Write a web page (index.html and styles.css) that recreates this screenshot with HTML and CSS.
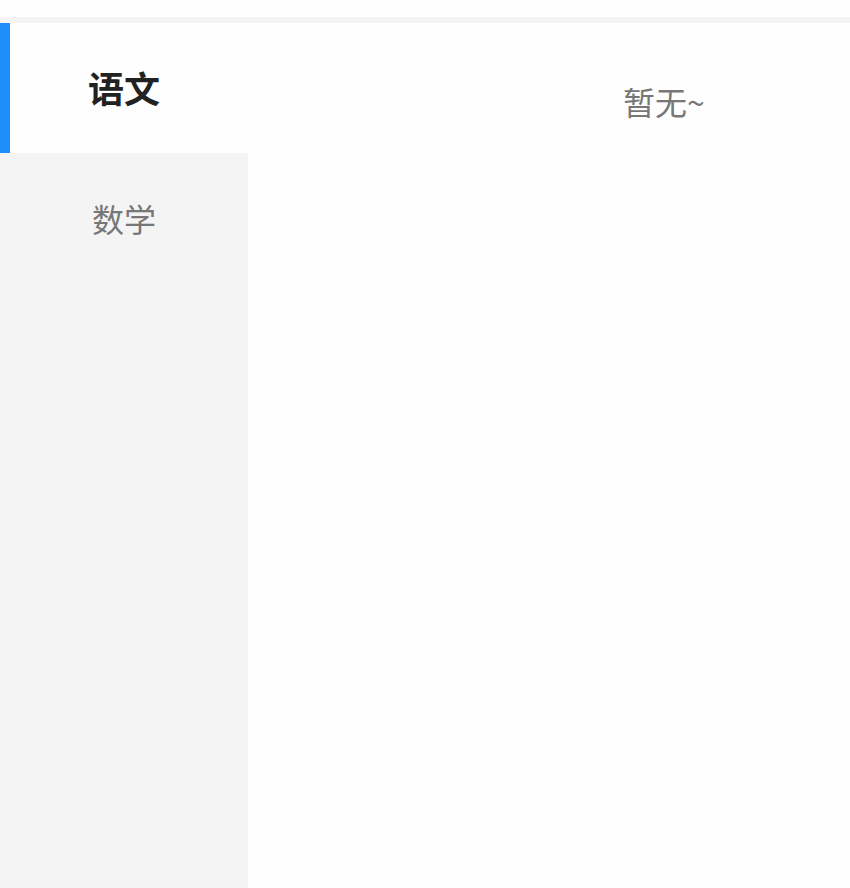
FILE: index.html
```html
<!DOCTYPE html>
<html lang="zh">
  <head>
    <meta charset="UTF-8" />
    <title>科目</title>
    <link rel="stylesheet" href="styles.css">
  </head>
  <body>
    <div class="top-gap"></div>
    <div class="page">
      <div class="side-menu">
        <div class="menu-item active">语文</div>
        <div class="menu-item">数学</div>
      </div>
      <div class="content">
        <div class="empty">暂无~</div>
      </div>
    </div>
  </body>
</html>
```

FILE: styles.css
```css
html,
body {
  height: 100%;
}
body {
  margin: 0;
  padding-top: 17px;
  box-sizing: border-box;
  background-color: #fefefe;
  font-family: "Noto Sans CJK SC", "Noto Sans", sans-serif;
  display: flex;
  flex-direction: column;
}
.top-gap {
  height: 6px;
  background-color: #f4f4f4;
}
.page {
  flex: 1;
  display: flex;
}
.side-menu {
  width: 248px;
  background-color: #f4f4f4;
}
.menu-item {
  height: 130px;
  display: flex;
  align-items: center;
  justify-content: center;
  font-size: 32px;
  color: #777;
}
.menu-item.active {
  background-color: #fefefe;
  border-left: 10px solid #1c8ffb;
  padding-right: 10px;
  box-sizing: border-box;
  font-size: 36px;
  font-weight: bold;
  color: #222;
  padding-bottom: 2px;
}
.menu-item + .menu-item {
  padding-bottom: 2px;
}
.content {
  flex: 1;
  background-color: #fefefe;
}
.empty {
  padding: 56px 0 0 375px;
  font-size: 32px;
  line-height: 44px;
  color: #777;
}
```
